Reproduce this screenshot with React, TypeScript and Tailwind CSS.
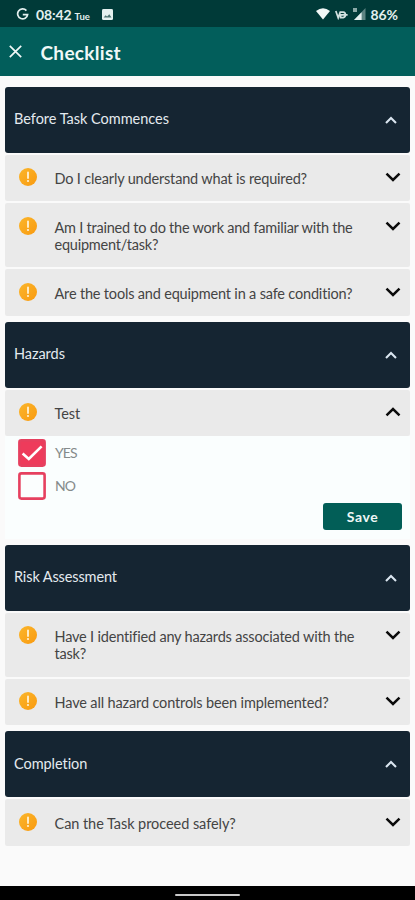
import { useState, type FC } from "react";

interface Question {
  id: string;
  text: string;
  tracking: string;
  tall?: boolean;
}

interface Section {
  title: string;
  tracking: string;
  questions: Question[];
}

const sections: Section[] = [
  {
    title: "Before Task Commences",
    tracking: "tracking-[-0.02px]",
    questions: [
      { id: "q1", text: "Do I clearly understand what is required?", tracking: "tracking-[-0.17px]" },
      {
        id: "q2",
        text: "Am I trained to do the work and familiar with the equipment/task?",
        tracking: "tracking-[-0.23px]",
        tall: true,
      },
      { id: "q3", text: "Are the tools and equipment in a safe condition?", tracking: "tracking-[-0.18px]" },
    ],
  },
  {
    title: "Hazards",
    tracking: "tracking-[-0.05px]",
    questions: [{ id: "test", text: "Test", tracking: "tracking-[-0.05px]" }],
  },
  {
    title: "Risk Assessment",
    tracking: "tracking-[-0.12px]",
    questions: [
      {
        id: "q4",
        text: "Have I identified any hazards associated with the task?",
        tracking: "tracking-[-0.19px]",
        tall: true,
      },
      { id: "q5", text: "Have all hazard controls been implemented?", tracking: "tracking-[-0.14px]" },
    ],
  },
  {
    title: "Completion",
    tracking: "tracking-[-0.05px]",
    questions: [{ id: "q6", text: "Can the Task proceed safely?", tracking: "tracking-[-0.06px]" }],
  },
];

const WarningIcon = () => (
  <svg width="18" height="18" viewBox="0 0 18 18" className="shrink-0">
    <defs>
      <linearGradient id="amber" x1="0" y1="0" x2="1" y2="1">
        <stop offset="0" stopColor="#fbb62b" />
        <stop offset="1" stopColor="#f99a10" />
      </linearGradient>
    </defs>
    <circle cx="9" cy="9" r="9" fill="url(#amber)" />
    <path d="M9 4.4v5.6" stroke="#fff3d6" strokeWidth="1.8" strokeLinecap="round" />
    <circle cx="9" cy="13" r="1.1" fill="#fff3d6" />
  </svg>
);

const Chevron: FC<{ open: boolean }> = ({ open }) => (
  <svg width="16" height="10" viewBox="0 0 16 10" fill="none" stroke="#0b0b0b" strokeWidth="2.5" className="shrink-0">
    <path d={open ? "M1.5 8.3 8 2l6.5 6.3" : "M1.5 1.7 8 8l6.5-6.3"} />
  </svg>
);

const StatusBar = () => (
  <div className="flex h-[27px] items-center justify-between bg-[#003a38] pr-[17px] pl-4 text-[#e3f0ef]">
    <div className="flex items-center pt-0.5">
      <svg width="13" height="13" viewBox="0 0 13 13" fill="none" stroke="currentColor" strokeWidth="1.7">
        <path d="M10.4 2.6A5 5 0 1 0 11.6 6.6H6.8" />
      </svg>
      <span className="ml-[7px] text-[14px] leading-none font-bold tracking-[-0.1px]">08:42</span>
      <span className="mt-1 ml-[3px] text-[9.5px] leading-none font-bold">Tue</span>
      <svg width="11" height="11" viewBox="0 0 11 12" preserveAspectRatio="none" className="mb-px ml-[12px]">
        <rect width="11" height="12" rx="1.5" fill="#e3f0ef" />
        <path d="M1.6 9.4 3.6 6.8l1.5 1.5L7.3 5.6l2.2 3.8z" fill="#4c7472" />
      </svg>
    </div>
    <div className="flex items-center pt-0.5">
      <svg width="14" height="12" viewBox="0 0 14 12" fill="#f2f8f7" className="mb-0.5">
        <path d="M0 3Q7-2.4 14 3L7 11.6z" />
      </svg>
      <svg width="13" height="10" viewBox="0 0 13 10" fill="none" stroke="#d3e2e1" strokeWidth="1.7" className="ml-[5px]">
        <path d="M.8 1 3.2 7.8 5.4 1.6M5 2.2h3.2q2.2.2 2.2 2.6T8.2 7.6H5.6V4.8h7" />
      </svg>
      <svg width="13" height="12" viewBox="0 0 13 12" className="mb-0.5 ml-[5px]">
        <path d="M12.5 0v12H1z" fill="#5d8482" />
        <path d="M8.6 4.2V12H1z" fill="#e3f0ef" />
        <rect width="4" height="4" fill="#8aa9a7" />
      </svg>
      <span className="ml-[5px] text-[14px] leading-none font-bold tracking-[-0.1px]">86%</span>
    </div>
  </div>
);

const Option: FC<{ label: string; checked: boolean; onClick: () => void }> = ({ label, checked, onClick }) => (
  <button onClick={onClick} className="flex h-[33.5px] shrink-0 items-center gap-[9px]">
    <svg width="28" height="28" viewBox="0 0 28 28" fill="none">
      <rect
        x="1.4"
        y="1.4"
        width="25.2"
        height="25.2"
        rx="2"
        fill={checked ? "#ee3b5b" : "#fbfefe"}
        stroke="#e6405f"
        strokeWidth="2.6"
      />
      {checked && <path d="m4.6 14.6 6.2 5.4L23.6 7.4" stroke="#fff" strokeWidth="2.6" />}
    </svg>
    <span className="text-[14px] leading-none tracking-[-0.9px] text-[#858b8b]">{label}</span>
  </button>
);

const QuestionRow: FC<{ question: Question; open: boolean; onToggle: () => void }> = ({ question, open, onToggle }) => (
  <button
    onClick={onToggle}
    className={`flex w-full items-start rounded-[2px] bg-[#eaeaea] pr-[9px] pl-[13.5px] text-left ${
      question.tall ? "h-[64px]" : "h-[46.5px]"
    }`}
  >
    <span className="pt-[13.5px]">
      <WarningIcon />
    </span>
    <span className={`mt-[15.5px] ml-[18px] flex-1 text-[14.5px] leading-[17.3px] text-[#444] ${question.tracking}`}>
      <span className="block w-[310px]">{question.text}</span>
    </span>
    <span className="pt-[17.5px]">
      <Chevron open={open} />
    </span>
  </button>
);

const App = () => {
  const [openId, setOpenId] = useState<string>("test");
  const [answer, setAnswer] = useState<string>("YES");

  return (
    <div className="flex h-[900px] w-[415px] flex-col overflow-hidden bg-[#fafafa] font-[Lato,sans-serif]">
      <StatusBar />
      <header className="flex h-[49px] items-center bg-[#025e5b] pl-[9px] text-[#f0f8f7]">
        <svg width="13" height="13" viewBox="0 0 13 13" stroke="currentColor" strokeWidth="1.7">
          <path d="m.8.8 11.4 11.4M12.2.8.8 12.2" />
        </svg>
        <h1 className="ml-[18.5px] pt-px text-[19px] leading-none font-bold tracking-[0.3px]">Checklist</h1>
      </header>

      <main className="flex flex-1 flex-col gap-[6px] px-[5px] pt-[10.5px]">
        {sections.map((section) => (
          <section key={section.title} className="flex flex-col gap-[2px]">
            <div className="flex h-[66px] items-center justify-between rounded-[3px] bg-[#152532] pr-[13px] pl-[9px]">
              <h2 className={`text-[14.5px] leading-none text-[#e4eaef] ${section.tracking}`}>{section.title}</h2>
              <svg width="12" height="8" viewBox="0 0 12 8" fill="none" stroke="#dbe6f0" strokeWidth="2.1">
                <path d="M1 7 6 2l5 5" />
              </svg>
            </div>
            {section.questions.map((question) => (
              <div key={question.id}>
                <QuestionRow
                  question={question}
                  open={openId === question.id}
                  onToggle={() => setOpenId(openId === question.id ? "" : question.id)}
                />
                {openId === question.id && (
                  <div className="flex h-[102.5px] flex-col bg-[#fafefe] pl-[13px]">
                    {["YES", "NO"].map((label) => (
                      <Option key={label} label={label} checked={answer === label} onClick={() => setAnswer(label)} />
                    ))}
                    <button className="mr-[8px] h-[27px] w-[79px] shrink-0 self-end rounded-[3px] bg-[#025e57] text-[14px] leading-none font-bold tracking-[0.6px] text-[#eef7f6]">
                      Save
                    </button>
                  </div>
                )}
              </div>
            ))}
          </section>
        ))}
      </main>

      <footer className="flex h-[14px] items-center justify-center bg-black pt-[3px]">
        <div className="h-[2px] w-[65px] rounded-full bg-[#c9c9c9]" />
      </footer>
    </div>
  );
};

export default App;
